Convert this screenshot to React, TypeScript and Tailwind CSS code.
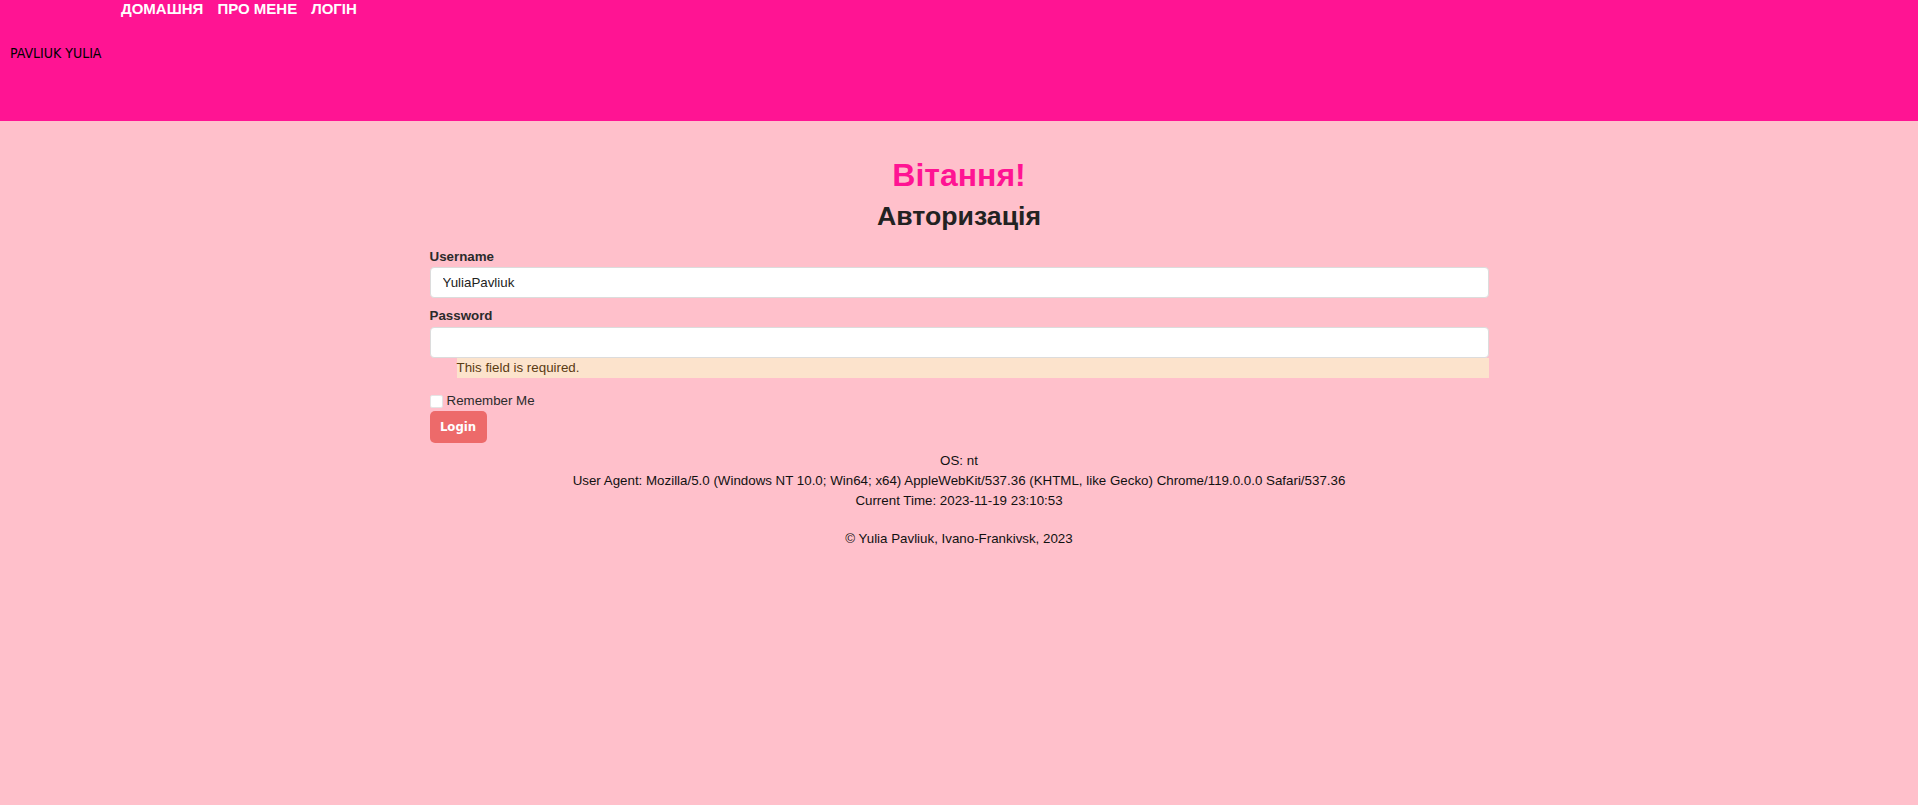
import React from 'react';

const App: React.FC = () => {
  return (
    <div className="min-h-[805px] bg-[#ffc0cb] font-['Liberation_Sans',Arial,sans-serif] text-[#222]">
      {/* Header */}
      <header className="h-[121px] bg-[#ff1493]">
        <nav className="flex gap-[14px] pl-[121px] text-[15px] font-bold leading-[17px] text-white">
          <a href="#">ДОМАШНЯ</a>
          <a href="#">ПРО МЕНЕ</a>
          <a href="#">ЛОГІН</a>
        </nav>
        <div className="mt-[28px] pl-[10px] font-['Liberation_Sans_Narrow','DejaVu_Sans_Condensed',sans-serif] text-[14px] leading-[17px] text-black">
          PAVLIUK YULIA
        </div>
      </header>

      {/* Login form */}
      <main className="mx-auto w-[1059px]">
        <h1 className="mt-[36px] text-center text-[32px] font-bold leading-[37px] text-[#ff1493]">Вітання!</h1>
        <h2 className="mt-[7px] text-center text-[26.67px] font-bold leading-[31px] text-[#222]">Авторизація</h2>

        <form className="mt-[17px]" onSubmit={(e) => e.preventDefault()}>
          <label className="block text-[13.33px] font-bold leading-[16px] text-[#2b2b2b]">Username</label>
          <input
            type="text"
            defaultValue="YuliaPavliuk"
            className="mt-[2px] block h-[31px] w-full rounded-[4px] border border-[#dcdcdc] bg-white px-3 text-[13.33px] text-[#222] outline-none"
          />

          <label className="mt-[10px] block text-[13.33px] font-bold leading-[16px] text-[#2b2b2b]">Password</label>
          <input
            type="password"
            className="mt-[3px] block h-[31px] w-full rounded-[4px] border border-[#dcdcdc] bg-white px-3 text-[13.33px] outline-none"
          />
          <div className="ml-[27px] h-[20px] bg-[#fce3cc] text-[13.33px] leading-[20px] text-[#5a3b12]">
            This field is required.
          </div>

          <div className="mt-[15px] flex items-center gap-[4px] text-[13.33px] leading-[16px] text-[#2b2b2b]">
            <span className="block h-[13px] w-[13px] rounded-[2px] border border-[#e4e4e4] bg-white" />
            <span>Remember Me</span>
          </div>

          <button
            type="submit"
            className="mt-[2px] flex h-[32px] w-[57px] items-center justify-center rounded-[5px] bg-[#ed6a6a] font-['Liberation_Sans_Narrow','DejaVu_Sans_Condensed',sans-serif] text-[13px] font-bold text-white"
          >
            Login
          </button>
        </form>

        {/* Footer info */}
        <div className="mt-[8px] text-center text-[13.33px] leading-[20px] text-[#111]">
          <p>OS: nt</p>
          <p>
            User Agent: Mozilla/5.0 (Windows NT 10.0; Win64; x64) AppleWebKit/537.36 (KHTML, like Gecko) Chrome/119.0.0.0 Safari/537.36
          </p>
          <p>Current Time: 2023-11-19 23:10:53</p>
          <p className="mt-[18px]">© Yulia Pavliuk, Ivano-Frankivsk, 2023</p>
        </div>
      </main>
    </div>
  );
};

export default App;
